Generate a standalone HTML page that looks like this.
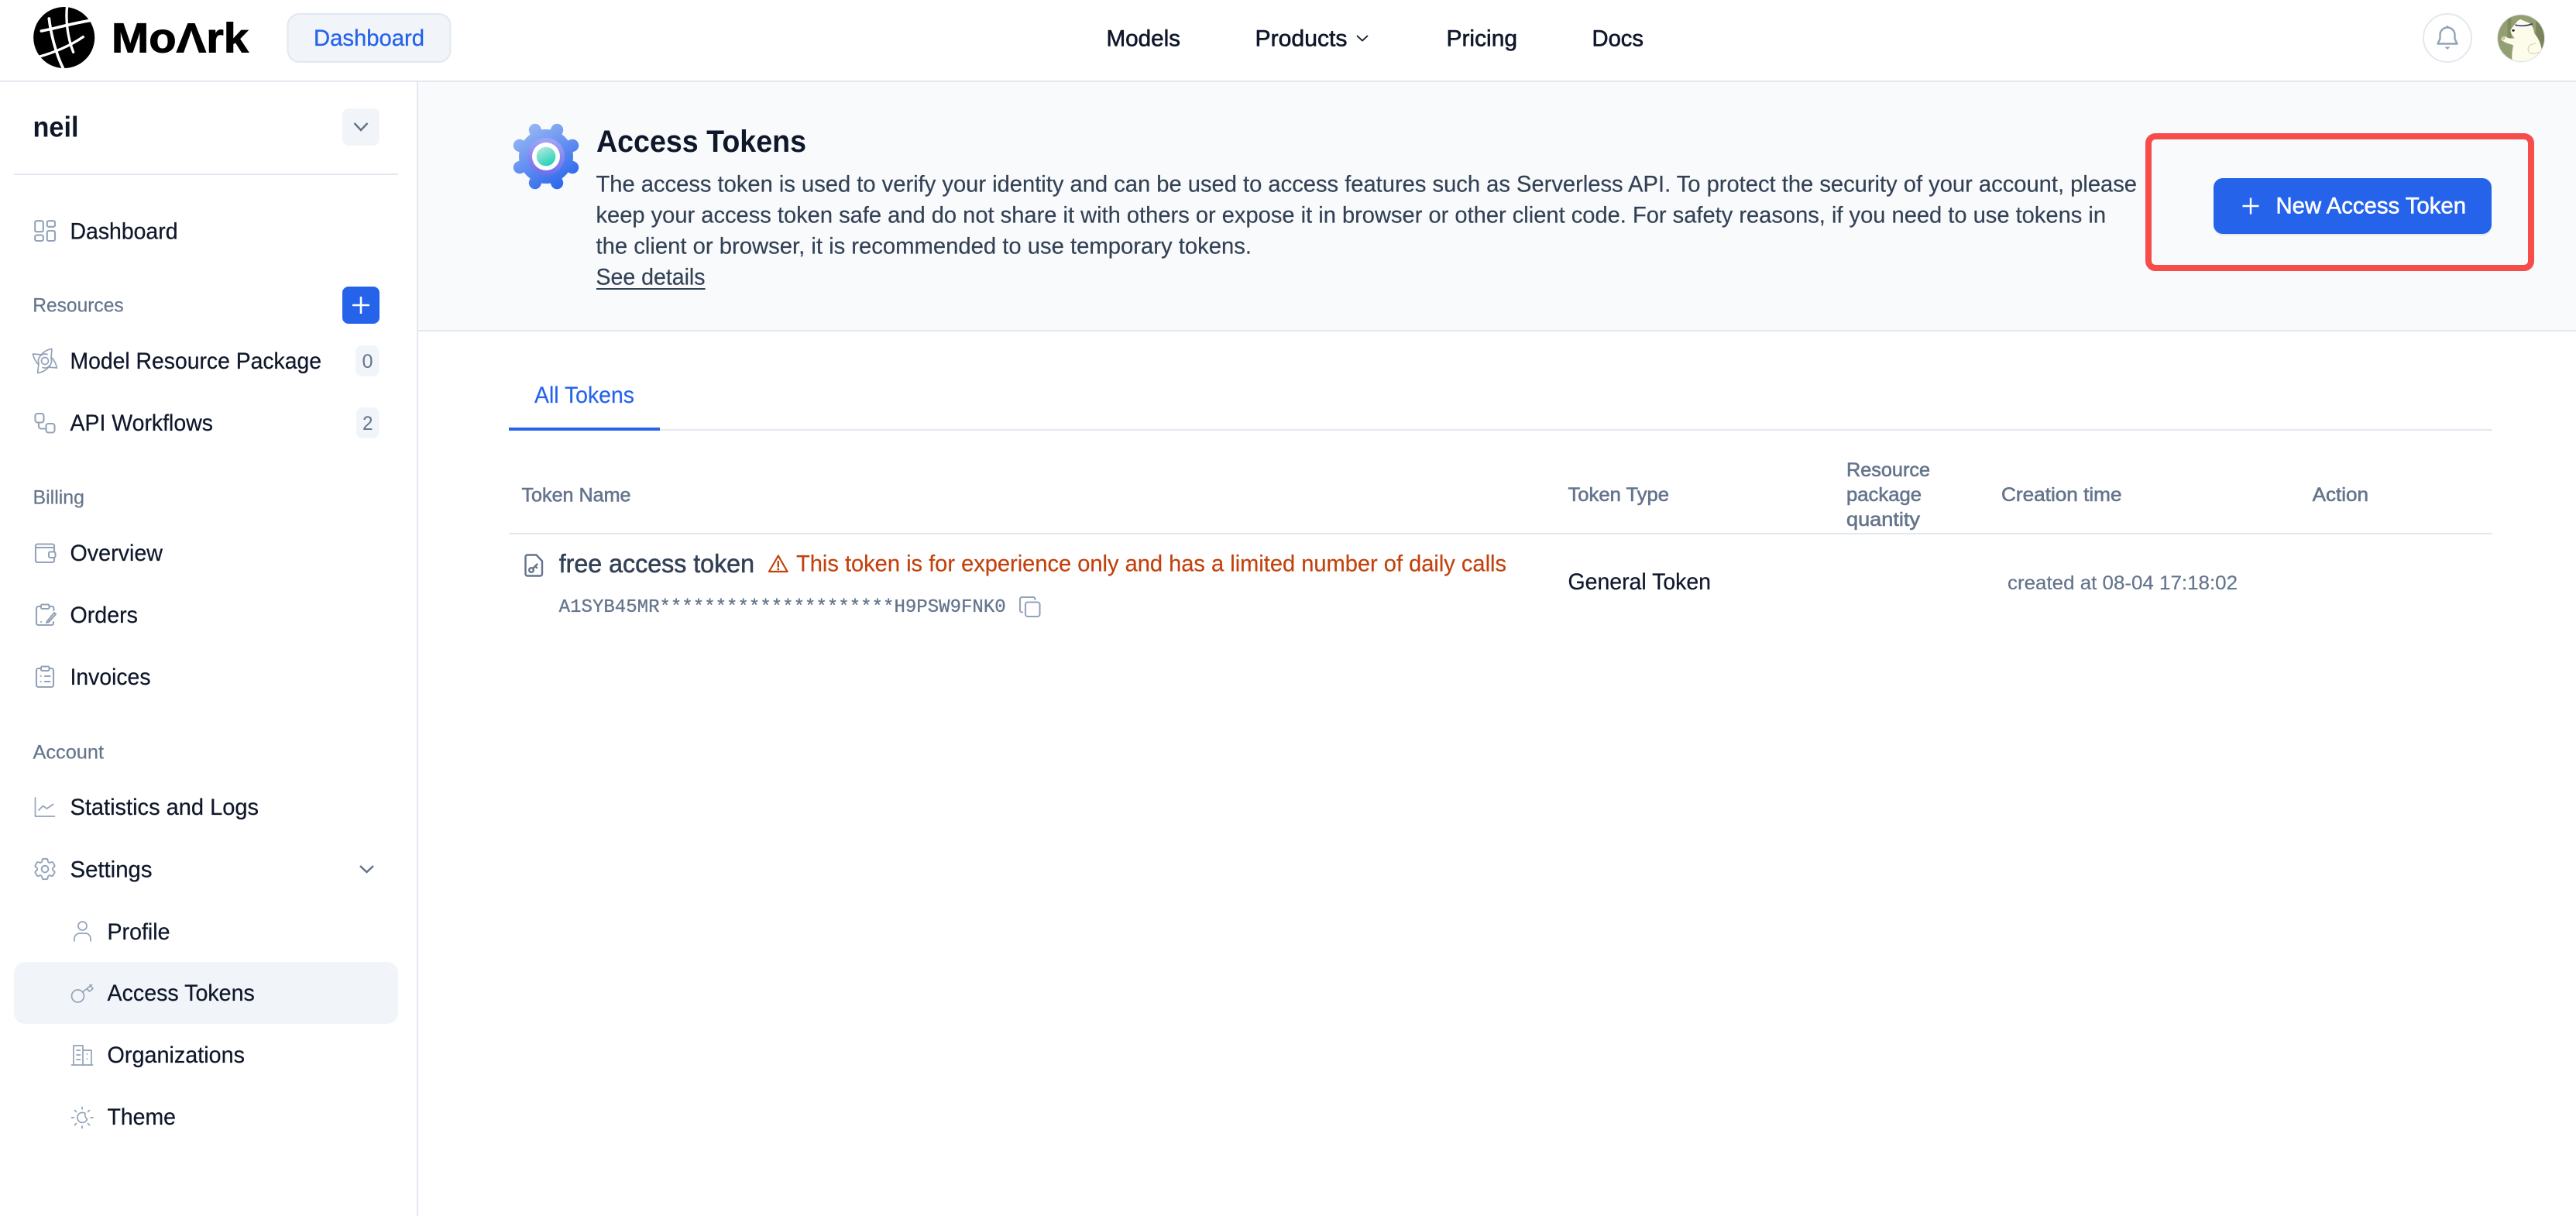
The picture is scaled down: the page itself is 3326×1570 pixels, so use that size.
<!DOCTYPE html>
<html lang="en"><head><meta charset="utf-8"><title>Access Tokens</title>
<style>
html,body{margin:0;padding:0;background:#fff;width:3326px;height:1570px;overflow:hidden}
svg{display:block}
text{font-family:"Liberation Sans",sans-serif;white-space:pre}
.m{font-size:29.7px;fill:#0f172a;stroke:#0f172a;stroke-width:.25px}
.md{font-size:29.7px;fill:#0f172a;stroke:#0f172a;stroke-width:.6px}
.s{font-size:25.4px;fill:#64748b;stroke:#64748b;stroke-width:.2px}
.th{font-size:25.4px;fill:#64748b;stroke:#64748b;stroke-width:.6px}
.p{font-size:29.7px;fill:#334155;stroke:#334155;stroke-width:.2px}
.i{fill:none;stroke:#94a3b8;stroke-width:2.1;stroke-linecap:round;stroke-linejoin:round}
.t{stroke-width:1.7}
</style></head><body>
<svg width="3326" height="1570" viewBox="0 0 3326 1570" xmlns="http://www.w3.org/2000/svg">
<defs>
<linearGradient id="g" gradientUnits="userSpaceOnUse" x1="680" y1="160" x2="730" y2="244"><stop offset="0" stop-color="#9cb9f6"/><stop offset="1" stop-color="#2563eb"/></linearGradient>
<linearGradient id="r" x1="0" y1="0" x2="0" y2="1"><stop offset="0" stop-color="#a3a6f5"/><stop offset="1" stop-color="#6d6eea"/></linearGradient>
<linearGradient id="t" x1="0.2" y1="0" x2="0.7" y2="1"><stop offset="0" stop-color="#b5e9dc"/><stop offset="1" stop-color="#1fd1b9"/></linearGradient>
<clipPath id="av"><circle cx="120" cy="118" r="90"/></clipPath>
</defs>

<!-- layout -->
<rect width="3326" height="1570" fill="#fff"/>
<rect x="540" y="106" width="2786" height="320" fill="#f8fafc"/>
<rect x="540" y="426" width="2786" height="2" fill="#e2e8f0"/>
<rect x="0" y="104" width="3326" height="2" fill="#e2e8f0"/>
<rect x="538" y="106" width="2" height="1464" fill="#e2e8f0"/>

<!-- logo -->
<circle cx="82.7" cy="48.5" r="39.5" fill="#000"/>
<g transform="translate(36 4) scale(.33333)" fill="none" stroke="#fff" stroke-linecap="round">
<path d="M152 10C146 60 152 130 176 190" stroke-width="10"/>
<path d="M82 60C88 110 105 190 138 256" stroke-width="11"/>
<path d="M52 108C100 100 170 78 250 66" stroke-width="11"/>
<path d="M42 208C100 192 165 165 214 131" stroke-width="10"/>
</g>
<text x="144" y="67.5" font-size="54" font-weight="700" fill="#000" stroke="#000" stroke-width="1" textLength="177" lengthAdjust="spacingAndGlyphs">MoΛrk</text>

<!-- dashboard pill -->
<rect x="371.5" y="18" width="210" height="62" rx="15" fill="#f1f5f9" stroke="#e2e8f0" stroke-width="2"/>
<text x="405" y="59" font-size="29.7" fill="#2563eb" stroke="#2563eb" stroke-width=".3" textLength="143" lengthAdjust="spacingAndGlyphs">Dashboard</text>

<!-- nav -->
<text class="md" x="1428.500" y="59.3" textLength="95.500" lengthAdjust="spacingAndGlyphs">Models</text>
<text class="md" x="1620.500" y="59.3" textLength="119" lengthAdjust="spacingAndGlyphs">Products</text>
<path d="M1752 46l7 6.5 7-6.5" fill="none" stroke="#0f172a" stroke-width="1.8"/>
<text class="md" x="1867.500" y="59.3" textLength="91.500" lengthAdjust="spacingAndGlyphs">Pricing</text>
<text class="md" x="2055.500" y="59.3" textLength="66.500" lengthAdjust="spacingAndGlyphs">Docs</text>

<!-- bell -->
<circle cx="3160" cy="49" r="31" fill="#fff" stroke="#e2e8f0" stroke-width="2"/>
<path class="i" style="stroke-width:2.4" d="M3150.500 50V45a9.500 9.500 0 0 1 19 0v5l3 6.500h-25z"/>
<path d="M3156.500 60.500h7l-3.500 3.500z" fill="#94a3b8"/>
<circle cx="3160" cy="34.500" r="1.500" fill="#94a3b8"/>

<!-- avatar -->
<g transform="translate(3215 10) scale(.33333)">
<circle cx="120" cy="118" r="93" fill="#e2e8f0"/>
<g clip-path="url(#av)">
<rect x="20" y="20" width="200" height="200" fill="#939f73"/>
<rect x="178" y="20" width="42" height="200" fill="#7c8259"/>
<rect x="68" y="20" width="14" height="100" fill="#7f8c5e"/>
<path d="M108 50L118 45L135 52L150 58C165 68 170 85 172 100C195 125 208 165 198 212L86 214C83 185 86 165 90 145C75 140 55 135 45 125C40 115 50 108 60 112C70 118 80 120 95 118C82 105 78 90 80 85C90 70 100 60 108 50Z" fill="#fdfbea"/>
<path d="M97 66C115 73 145 70 165 62" fill="none" stroke="#3a3d78" stroke-width="5"/>
<ellipse cx="90" cy="88" rx="5.500" ry="4" fill="#1d1d1d"/>
<path d="M178 140C160 138 140 150 150 170C158 182 180 178 190 172" fill="none" stroke="#b9b99c" stroke-width="2"/>
<circle cx="52" cy="118" r="7" fill="#d9c2a6"/>
</g>
</g>

<!-- sidebar head -->
<text x="42.500" y="176.700" font-size="37" font-weight="700" fill="#0f172a" textLength="59" lengthAdjust="spacingAndGlyphs">neil</text>
<rect x="442" y="140" width="48" height="48" rx="8" fill="#f1f5f9"/>
<path d="M457.500 159l8.500 9 8.500-9" fill="none" stroke="#64748b" stroke-width="2.500"/>
<rect x="18" y="224" width="496" height="2" fill="#e2e8f0"/>

<!-- dashboard -->
<g class="i"><rect x="45.200" y="285.200" width="10.600" height="14" rx="2"/><rect x="60.800" y="285.200" width="10.200" height="7.600" rx="2"/><rect x="45.200" y="303.600" width="10.600" height="7.400" rx="2"/><rect x="60.800" y="298" width="10.200" height="13" rx="2"/></g>
<text class="m" x="90.500" y="308.300" textLength="139" lengthAdjust="spacingAndGlyphs">Dashboard</text>

<!-- resources -->
<text class="s" x="42.200" y="402.500" textLength="117.500" lengthAdjust="spacingAndGlyphs">Resources</text>
<rect x="442" y="370" width="48" height="48" rx="8" fill="#2563eb"/>
<path d="M466 383v22M455 394h22" stroke="#fff" stroke-width="2.600" fill="none"/>

<g class="i t">
<circle cx="58" cy="466" r="4.500"/><path d="M51 461a8.500 8.500 0 0 1 10-3.500M66 463a8.500 8.500 0 0 1-3 10M65 471.500a8.500 8.500 0 0 1-10 3M50 469a8.500 8.500 0 0 1 1-8"/>
<path d="M54 457C58 453 62 451 67 450.500L66 462"/>
<path d="M67 462C71 466 72 470 73.500 475L62 474"/>
<path d="M62 475C58 479 54 481 48.500 481.500L50 470"/>
<path d="M49 470C45 466 44 462 42.500 457L54 458"/>
</g>
<text class="m" x="90.500" y="476" textLength="324.500" lengthAdjust="spacingAndGlyphs">Model Resource Package</text>
<rect x="459" y="446" width="30.600" height="40" rx="8" fill="#f1f5f9"/>
<text x="467.500" y="475" font-size="25.400" fill="#64748b" textLength="14" lengthAdjust="spacingAndGlyphs">0</text>

<g class="i"><rect x="45.500" y="534" width="11" height="11.500" rx="3"/><rect x="59.500" y="547" width="11" height="11.500" rx="3"/><path d="M50 545.500v5a3 3 0 0 0 3 3h6.500"/></g>
<text class="m" x="90.500" y="556" textLength="184.500" lengthAdjust="spacingAndGlyphs">API Workflows</text>
<rect x="460" y="526" width="29.600" height="40" rx="8" fill="#f1f5f9"/>
<text x="468" y="555" font-size="25.400" fill="#64748b" textLength="13.500" lengthAdjust="spacingAndGlyphs">2</text>

<!-- billing -->
<text class="s" x="42.500" y="650.700" textLength="66.500" lengthAdjust="spacingAndGlyphs">Billing</text>
<g class="i"><path d="M70 712.500V705a2.500 2.500 0 0 0-2.500-2.500H48.500A2.500 2.500 0 0 0 46 705v19a2 2 0 0 0 2 2h20a2 2 0 0 0 2-2v-4"/><path d="M46 707h24"/><rect x="63" y="712.500" width="8.500" height="7.500" rx="2"/></g>
<text class="m" x="90.500" y="724" textLength="119.500" lengthAdjust="spacingAndGlyphs">Overview</text>
<g class="i"><path d="M53 783h-3.500a2.500 2.500 0 0 0-2.500 2.500v19a2.500 2.500 0 0 0 2.500 2.500h17a2.500 2.500 0 0 0 2.500-2.500V803M63.500 783H67a2.500 2.500 0 0 1 2.500 2.500V788"/><rect x="53" y="780.500" width="10.500" height="5.500" rx="1.500"/><path d="M61 802l9-11 2 2-9 10-3 1z"/><path d="M53 803h.2"/></g>
<text class="m" x="90.500" y="804" textLength="87.500" lengthAdjust="spacingAndGlyphs">Orders</text>
<g class="i"><path d="M53 863h-3.500a2.500 2.500 0 0 0-2.500 2.500v19a2.500 2.500 0 0 0 2.500 2.500h17a2.500 2.500 0 0 0 2.500-2.500v-19A2.500 2.500 0 0 0 66.500 863H63.500"/><rect x="53" y="860.500" width="10.500" height="5.500" rx="1.500"/><path d="M58 873h6.500M58 880h6.500"/><path d="M52.500 873h.2M52.500 880h.2"/></g>
<text class="m" x="90.500" y="884" textLength="104" lengthAdjust="spacingAndGlyphs">Invoices</text>

<!-- account -->
<text class="s" x="42.500" y="979.500" textLength="91.500" lengthAdjust="spacingAndGlyphs">Account</text>
<g class="i t"><path d="M45.500 1030v24h25"/><path d="M50 1046l5.500-5.500 5 3.500 8-5.500"/></g>
<text class="m" x="90.500" y="1052" textLength="243.500" lengthAdjust="spacingAndGlyphs">Statistics and Logs</text>
<g transform="translate(40.500 1104.500) scale(1.460)" fill="none" stroke="#94a3b8" stroke-width="1.300" stroke-linejoin="round">
<path d="M9.594 3.940c.09-.542.56-.94 1.110-.94h2.593c.55 0 1.020.398 1.110.94l.213 1.281c.063.374.313.686.645.870.074.040.147.083.22.127.325.196.72.257 1.075.124l1.217-.456a1.125 1.125 0 011.370.490l1.296 2.247a1.125 1.125 0 01-.26 1.431l-1.003.827c-.293.241-.438.613-.43.992a7.723 7.723 0 010 .255c-.008.378.137.75.43.991l1.004.827c.424.35.534.955.26 1.430l-1.298 2.247a1.125 1.125 0 01-1.369.491l-1.217-.456c-.355-.133-.75-.072-1.076.124a6.570 6.570 0 01-.22.128c-.331.183-.581.495-.644.869l-.213 1.280c-.09.543-.56.941-1.110.941h-2.594c-.55 0-1.020-.398-1.110-.94l-.213-1.281c-.062-.374-.312-.686-.644-.87a6.520 6.520 0 01-.22-.127c-.325-.196-.72-.257-1.076-.124l-1.217.456a1.125 1.125 0 01-1.369-.49l-1.297-2.247a1.125 1.125 0 01.26-1.431l1.004-.827c.292-.24.437-.613.43-.992a6.932 6.932 0 010-.255c.007-.378-.138-.75-.43-.992l-1.004-.827a1.125 1.125 0 01-.26-1.430l1.297-2.247a1.125 1.125 0 011.370-.491l1.216.456c.356.133.751.072 1.076-.124.072-.044.146-.087.22-.128.332-.183.582-.495.644-.869l.214-1.281z"/>
<circle cx="12" cy="12" r="3"/></g>
<text class="m" x="90.500" y="1132.500" textLength="106" lengthAdjust="spacingAndGlyphs">Settings</text>
<path d="M465 1118l8.500 8 8.500-8" fill="none" stroke="#64748b" stroke-width="2.500"/>

<g class="i t"><circle cx="106.500" cy="1195.500" r="5.500"/><path d="M96 1215v-3a7 7 0 0 1 7-7h7a7 7 0 0 1 7 7v3"/></g>
<text class="m" x="138.500" y="1212.800" textLength="81" lengthAdjust="spacingAndGlyphs">Profile</text>

<rect x="18" y="1242" width="496" height="80" rx="14" fill="#f1f5f9"/>
<g class="i t"><circle cx="100.500" cy="1286" r="8"/><path d="M106.500 1281l12-9.500M112 1276.500l3.500 3.500 4.500-3.500-4-5"/></g>
<text class="m" x="138.500" y="1292" textLength="190.300" lengthAdjust="spacingAndGlyphs">Access Tokens</text>

<g class="i t"><path d="M92.500 1375h27M95 1375v-25h12v25M107 1356h11v19M99 1356h4.500M99 1362h4.500M99 1368h4.500M112.500 1361v.2M112.500 1367v.2"/></g>
<text class="m" x="138.500" y="1372" textLength="177.500" lengthAdjust="spacingAndGlyphs">Organizations</text>

<g class="i t"><path d="M110 1437.500a6.500 6.500 0 1 0 2.500 7.500 7 7 0 0 1-2.500-7.500z"/><path d="M106 1429.500v2.500M106 1454v2.500M92.500 1443h3M117 1443h3M96.500 1433.500l2 2M113.500 1450.500l2 2M96.500 1452.500l2-2M113.500 1435.500l2-2"/></g>
<text class="m" x="138.500" y="1452" textLength="88.500" lengthAdjust="spacingAndGlyphs">Theme</text>

<!-- hero -->
<g fill="none" stroke="url(#g)" stroke-width="16" stroke-linecap="round">
<path d="M690.800 167.800L719.200 236.200M719.200 167.800L690.800 236.200M670.800 187.800L739.200 216.200M739.200 187.800L670.800 216.200"/>
</g>
<circle cx="705" cy="202" r="35" fill="url(#g)"/>
<circle cx="705" cy="202" r="24" fill="url(#r)"/>
<circle cx="705" cy="202" r="18" fill="#fff"/>
<circle cx="705" cy="202" r="12.300" fill="url(#t)"/>

<text x="770" y="196" font-size="40" font-weight="700" fill="#0f172a" textLength="271" lengthAdjust="spacingAndGlyphs">Access Tokens</text>
<text class="p" x="769.500" y="247.300" textLength="1989.500" lengthAdjust="spacingAndGlyphs">The access token is used to verify your identity and can be used to access features such as Serverless API. To protect the security of your account, please</text>
<text class="p" x="769.500" y="287.300" textLength="1949.500" lengthAdjust="spacingAndGlyphs">keep your access token safe and do not share it with others or expose it in browser or other client code. For safety reasons, if you need to use tokens in</text>
<text class="p" x="769.500" y="327.300" textLength="846.500" lengthAdjust="spacingAndGlyphs">the client or browser, it is recommended to use temporary tokens.</text>
<text class="p" x="769.500" y="367.300" textLength="141" lengthAdjust="spacingAndGlyphs">See details</text>
<rect x="770" y="372" width="140.600" height="2" fill="#334155"/>

<!-- red box -->
<rect x="2774" y="176" width="494" height="170" rx="9" fill="none" stroke="#f64d4b" stroke-width="8"/>
<!-- button -->
<rect x="2858" y="232" width="359" height="72" rx="12" fill="#64748b" opacity=".12"/>
<rect x="2858" y="230" width="359" height="72" rx="12" fill="#2563eb"/>
<path d="M2906 255.500v21M2895.500 266h21" stroke="#fff" stroke-width="2.400" fill="none"/>
<text x="2938.500" y="275.700" font-size="29.700" fill="#fff" stroke="#fff" stroke-width=".6" textLength="245.500" lengthAdjust="spacingAndGlyphs">New Access Token</text>

<!-- tabs -->
<text x="690" y="520" font-size="29.700" fill="#2563eb" stroke="#2563eb" stroke-width=".2" textLength="129" lengthAdjust="spacingAndGlyphs">All Tokens</text>
<rect x="657" y="554" width="2561" height="2" fill="#e2e8f0"/>
<rect x="657" y="552" width="195" height="4" fill="#2563eb"/>

<!-- table head -->
<text class="th" x="673.500" y="647.500" textLength="141" lengthAdjust="spacingAndGlyphs">Token Name</text>
<text class="th" x="2024.500" y="647" textLength="130.500" lengthAdjust="spacingAndGlyphs">Token Type</text>
<text class="th" x="2384" y="615" textLength="108" lengthAdjust="spacingAndGlyphs">Resource</text>
<text class="th" x="2384" y="647" textLength="97" lengthAdjust="spacingAndGlyphs">package</text>
<text class="th" x="2384" y="679" textLength="95" lengthAdjust="spacingAndGlyphs">quantity</text>
<text class="th" x="2584" y="647" textLength="155.500" lengthAdjust="spacingAndGlyphs">Creation time</text>
<text class="th" x="2985.600" y="647" textLength="72.400" lengthAdjust="spacingAndGlyphs">Action</text>
<rect x="657" y="688" width="2561" height="2" fill="#e2e8f0"/>

<!-- row -->
<g fill="none" stroke="#64748b" stroke-width="2.400" stroke-linejoin="round" stroke-linecap="round"><path d="M681 716.500h11.500l7.500 8v16.500a2.500 2.500 0 0 1-2.500 2.500h-16.500a2.500 2.500 0 0 1-2.500-2.500v-22a2.500 2.500 0 0 1 2.500-2.500z"/><circle cx="686" cy="736" r="2.800"/><path d="M688 734l5.500-5.500M691 731l2 2"/></g>
<text x="721.700" y="739" font-size="33" fill="#334155" stroke="#334155" stroke-width=".55" textLength="252.300" lengthAdjust="spacingAndGlyphs">free access token</text>
<g fill="none" stroke="#c2410c" stroke-width="2.200" stroke-linejoin="round" stroke-linecap="round"><path d="M1004.800 717.500l11.800 20.500h-23.600z"/><path d="M1004.800 725v6.500" stroke-width="2.400"/><path d="M1004.800 734.800v.2" stroke-width="2.800"/></g>
<text x="1028" y="737.300" font-size="29.700" fill="#c2410c" stroke="#c2410c" stroke-width=".2" textLength="917" lengthAdjust="spacingAndGlyphs">This token is for experience only and has a limited number of daily calls</text>
<text x="721.700" y="790" font-size="24" style="font-family:'Liberation Mono',monospace" fill="#64748b" stroke="#64748b" stroke-width=".3" textLength="577" lengthAdjust="spacingAndGlyphs">A1SYB45MR*********************H9PSW9FNK0</text>
<g class="i"><rect x="1324" y="777.500" width="18.500" height="18.500" rx="3"/><path d="M1320 790.500h-.5a2.500 2.500 0 0 1-2.500-2.500v-14.500a2.500 2.500 0 0 1 2.500-2.500H1334a2.500 2.500 0 0 1 2.500 2.500v.5"/></g>
<text class="m" x="2024.500" y="761" textLength="184.500" lengthAdjust="spacingAndGlyphs">General Token</text>
<text class="s" x="2592" y="761" textLength="297" lengthAdjust="spacingAndGlyphs">created at 08-04 17:18:02</text>
</svg>
</body></html>
